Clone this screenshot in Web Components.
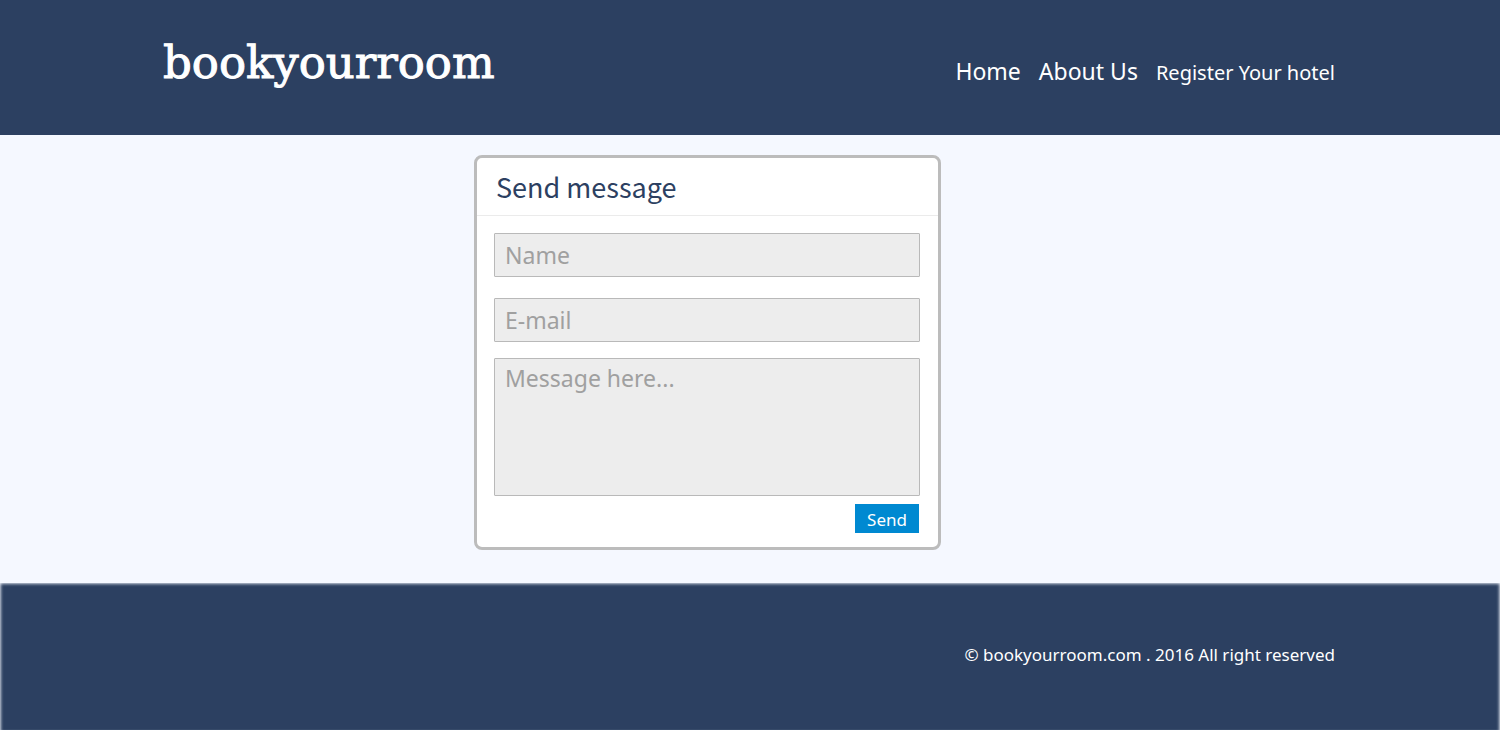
<!DOCTYPE html>
<html lang="en">
<head>
<meta charset="utf-8">
<meta name="viewport" content="width=device-width, initial-scale=1">
<title>bookyourroom – Send message</title>
<style>
html, body { margin: 0; min-height: 100%; }
body { --navy: #2c4061; --page: #f5f8ff; background: var(--page); font-family: "Noto Sans", "Open Sans", sans-serif; }
</style>
</head>
<body>
<room-page>
  <site-header slot="header">
    <site-logo slot="logo">bookyourroom</site-logo>
    <nav-link href="#home">Home</nav-link>
    <nav-link href="#about">About Us</nav-link>
    <nav-link href="#register" compact>Register Your hotel</nav-link>
  </site-header>
  <message-card><span slot="title">Send message</span></message-card>
  <site-footer slot="footer">© bookyourroom.com . 2016 All right reserved</site-footer>
</room-page>
<script>
function define(name, html, setup) {
  const template = document.createElement('template');
  template.innerHTML = html;
  customElements.define(name, class extends HTMLElement {
    constructor() {
      super();
      this.attachShadow({ mode: 'open' }).append(template.content.cloneNode(true));
    }
    connectedCallback() { if (setup) setup(this, this.shadowRoot); }
  });
}

define('room-page', `
<style>
:host { display: flex; flex-direction: column; min-height: 100vh; }
main { display: grid; grid-template-columns: 474fr minmax(0, 467px) 559fr; padding: 20px 0 33px; }
main ::slotted(*) { grid-column: 2; }
::slotted(site-footer) { flex: 1; }
</style>
<slot name="header"></slot>
<main><slot></slot></main>
<slot name="footer"></slot>`);

define('site-header', `
<style>
:host { display: block; background: var(--navy); color: #fff; }
header { display: flex; align-items: center; justify-content: space-between; flex-wrap: wrap;
  box-sizing: border-box; max-width: 1174px; min-height: 135px; margin: 0 auto; padding-right: 2px; }
nav { display: flex; align-items: baseline; gap: 18px; padding-top: 8px; }
</style>
<header><slot name="logo"></slot><nav aria-label="Main"><slot></slot></nav></header>`);

define('site-logo', `
<style>
:host { display: block; padding-bottom: 10px; }
a { color: inherit; text-decoration: none; font: 45px/56px "DejaVu Serif", serif; -webkit-text-stroke: 1px currentColor; }
</style>
<a href="#home"><slot></slot></a>`);

define('nav-link', `
<style>
:host { display: block; font-size: 23px; line-height: 30px; }
:host([compact]) { font-size: 20px; }
a { color: inherit; text-decoration: none; }
</style>
<a><slot></slot></a>`, (host, root) => {
  root.querySelector('a').href = host.getAttribute('href');
});

define('message-card', `
<style>
:host { display: block; box-sizing: border-box; background: #fff; border: 3px solid #bcbcbc; border-radius: 8px; overflow: hidden; }
h1 { margin: 0; padding: 8px 19px; border-bottom: 1px solid #ebebeb; color: var(--navy);
  font: 400 27px/41px "Noto Sans CJK SC", "Noto Sans", sans-serif; }
form { display: flex; flex-direction: column; padding: 17px 18px 14px 17px; }
input, textarea { display: block; box-sizing: border-box; width: 100%; margin: 0; padding: 0 10px;
  border: 1px solid #b9b9b9; border-radius: 1px; background: #ededed; color: #555;
  font: 23px/32px "Noto Sans", sans-serif; outline-color: #0089d1; }
input { height: 44px; }
#email { margin: 21px 0 16px; }
textarea { height: 138px; padding-top: 3px; resize: none; }
::placeholder { color: #a0a0a0; opacity: 1; }
button { align-self: flex-end; width: 64px; height: 29px; margin: 8px 1px 0 0; padding: 2px 0 0; border: 0;
  background: #0089d1; color: #fff; font: 17px/27px "Noto Sans", sans-serif; cursor: pointer; }
</style>
<h1><slot name="title"></slot></h1>
<form>
  <input id="name" name="name" type="text" aria-label="Name" placeholder="Name" autocomplete="name">
  <input id="email" name="email" type="email" aria-label="E-mail" placeholder="E-mail" autocomplete="email">
  <textarea name="message" aria-label="Message" placeholder="Message here..."></textarea>
  <button type="submit">Send</button>
</form>`, (host, root) => {
  root.querySelector('form').addEventListener('submit', e => e.preventDefault());
});

define('site-footer', `
<style>
:host { display: block; min-height: 147px; background: var(--navy); color: #fff; box-sizing: border-box;
  box-shadow: inset 3px 0 3px -2px rgba(245, 248, 255, .8), inset -3px 0 3px -2px rgba(245, 248, 255, .8),
    inset 0 3px 3px -2px rgba(245, 248, 255, .8); }
footer { box-sizing: border-box; max-width: 1174px; margin: 0 auto; padding: 60px 2px 60px 0; text-align: right; font-size: 17px; line-height: 24px; }
</style>
<footer><slot></slot></footer>`);
</script>
</body>
</html>
